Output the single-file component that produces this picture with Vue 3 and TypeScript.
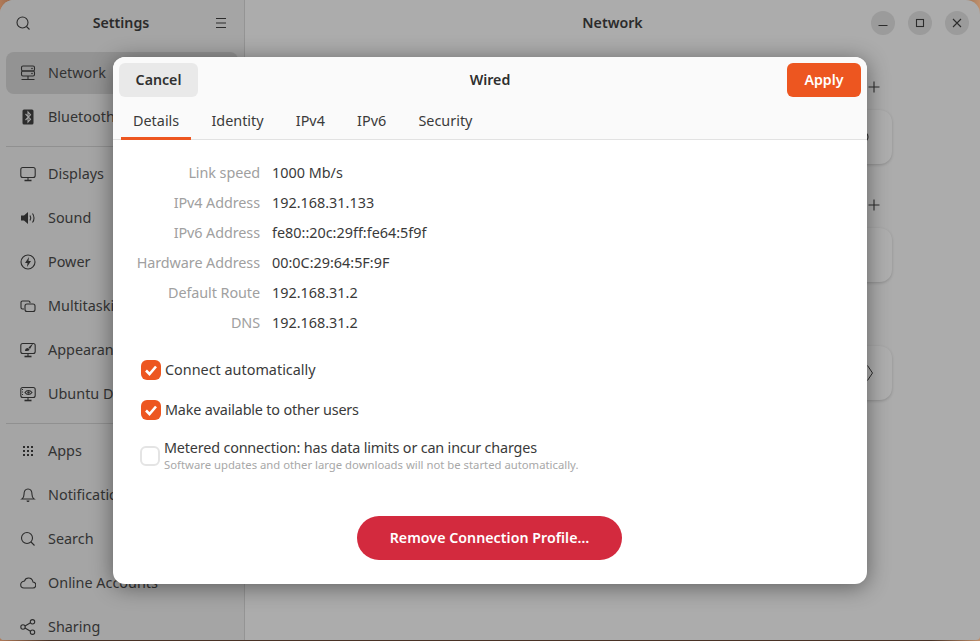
<script setup lang="ts">
interface NavItem { label: string; icon: string }
const navGroups: NavItem[][] = [
  [{ label: 'Network', icon: 'network' }, { label: 'Bluetooth', icon: 'bluetooth' }],
  [
    { label: 'Displays', icon: 'displays' },
    { label: 'Sound', icon: 'sound' },
    { label: 'Power', icon: 'power' },
    { label: 'Multitasking', icon: 'multitasking' },
    { label: 'Appearance', icon: 'appearance' },
    { label: 'Ubuntu Desktop', icon: 'ubuntu' },
  ],
  [
    { label: 'Apps', icon: 'apps' },
    { label: 'Notifications', icon: 'bell' },
    { label: 'Search', icon: 'search' },
    { label: 'Online Accounts', icon: 'cloud' },
    { label: 'Sharing', icon: 'share' },
  ],
]
const tabs = ['Details', 'Identity', 'IPv4', 'IPv6', 'Security']
const details = [
  ['Link speed', '1000 Mb/s'],
  ['IPv4 Address', '192.168.31.133'],
  ['IPv6 Address', 'fe80::20c:29ff:fe64:5f9f'],
  ['Hardware Address', '00:0C:29:64:5F:9F'],
  ['Default Route', '192.168.31.2'],
  ['DNS', '192.168.31.2'],
]
</script>

<template>
  <div class="desktop">
    <div class="window">
      <aside class="sidebar">
        <header class="side-head">
          <svg class="ic" viewBox="0 0 16 16"><circle cx="7.500" cy="7.500" r="5.500" /><path d="M11.500 11.500l3 3" /></svg>
          <span class="side-title">Settings</span>
          <svg class="ic" viewBox="0 0 16 16"><path d="M3 3.500h10M3 8h10M3 12.500h10" /></svg>
        </header>
        <template v-for="(group, gi) in navGroups" :key="gi">
          <div v-if="gi" class="divider"></div>
          <nav class="group">
            <div v-for="item in group" :key="item.label" class="nav" :class="{ active: item.label === 'Network' }">
              <svg class="ic nav-ic" viewBox="0 0 16 16">
                <template v-if="item.icon === 'network'">
                  <rect x="1.500" y="1" width="13" height="5" rx="1.500" /><rect x="1.500" y="6" width="13" height="5" rx="1.500" /><path d="M8 11v3M1.500 14.500h13" /><circle class="fill" cx="12" cy="3.500" r=".8" /><circle class="fill" cx="12" cy="8.500" r=".8" />
                </template>
                <template v-else-if="item.icon === 'bluetooth'">
                  <rect class="fill" x="2.500" y="0.500" width="11" height="15" rx="1.500" /><path class="cut" d="M5.500 5l5 5.200L8 13V3l2.500 2.800-5 5.200" />
                </template>
                <template v-else-if="item.icon === 'displays'">
                  <rect x="0.800" y="1.500" width="14.400" height="10" rx="2" /><path d="M8 11.500v2.500" /><path class="thick" d="M4.500 14.500h7" />
                </template>
                <template v-else-if="item.icon === 'sound'">
                  <path class="fill" d="M1 5.500h3L8 2v12L4 10.500H1z" /><path d="M10 5.500c1 1.500 1 3.500 0 5M12.500 3.500c2 2.500 2 6.500 0 9" />
                </template>
                <template v-else-if="item.icon === 'power'">
                  <circle cx="8" cy="8" r="7" /><path class="fill" d="M9 3L5 9h2.500L7 13l4-6H8.500z" />
                </template>
                <template v-else-if="item.icon === 'multitasking'">
                  <path d="M4 11H2.500A1.500 1.500 0 0 1 1 9.500v-5A1.500 1.500 0 0 1 2.500 3h6A1.500 1.500 0 0 1 10 4.500V5" /><rect x="5" y="6" width="10" height="7.500" rx="2" />
                </template>
                <template v-else-if="item.icon === 'appearance'">
                  <rect x="0.800" y="1.500" width="14.400" height="10" rx="2" /><path d="M8 11.500v2.500" /><path class="thick" d="M4.500 14.500h7" /><path class="fill" d="M13.500 0.800L8.500 5.500 10 7zM8 6c-2 0-3 1-3 3 1.500 0 4.500 0 4.500-1.500z" />
                </template>
                <template v-else-if="item.icon === 'ubuntu'">
                  <rect x="0.800" y="1.500" width="14.400" height="10" rx="2" /><path d="M8 11.500v2.500" /><path class="thick" d="M4.500 14.500h7" /><path d="M5 6.500c1.800-2.600 5-2.600 7 0-2 2.600-5.200 2.600-7 0zM2 3.500h1M2 6h1M2 8.500h1" /><circle class="fill" cx="8.500" cy="6.500" r="1.200" />
                </template>
                <template v-else-if="item.icon === 'apps'">
                  <g class="fill"><rect x="3" y="3" width="2" height="2" /><rect x="7" y="3" width="2" height="2" /><rect x="11" y="3" width="2" height="2" /><rect x="3" y="7" width="2" height="2" /><rect x="7" y="7" width="2" height="2" /><rect x="11" y="7" width="2" height="2" /><rect x="3" y="11" width="2" height="2" /><rect x="7" y="11" width="2" height="2" /><rect x="11" y="11" width="2" height="2" /></g>
                </template>
                <template v-else-if="item.icon === 'bell'">
                  <path d="M2 12c1.500-1 2-2 2-4.500C4 4 5.500 2 8 2s4 2 4 5.500c0 2.500.5 3.500 2 4.500z" /><path class="fill" d="M6.500 13.500h3a1.500 1.500 0 0 1-3 0z" />
                </template>
                <template v-else-if="item.icon === 'search'">
                  <circle cx="7" cy="7" r="5.500" /><path d="M11 11l3.500 3.500" />
                </template>
                <template v-else-if="item.icon === 'cloud'">
                  <path d="M4 13h8.500a3 3 0 0 0 .5-6C12.500 4.500 10.500 3 8.500 3 6.500 3 5 4.200 4.500 6 2.500 6.300.7 7.800.7 9.800.7 11.800 2.200 13 4 13z" />
                </template>
                <template v-else>
                  <circle cx="3" cy="8" r="2.200" /><circle cx="12.500" cy="2.800" r="2.200" /><circle cx="12.500" cy="13.200" r="2.200" /><path d="M5 7l5.500-3.200M5 9l5.500 3.200" />
                </template>
              </svg>
              <span class="nav-text">{{ item.label }}</span>
            </div>
          </nav>
        </template>
      </aside>

      <main class="content">
        <header class="main-head">
          <span class="main-title">Network</span>
          <div class="controls">
            <span class="ctl"><svg class="ic" viewBox="0 0 16 16"><path d="M3.500 10.500h9" /></svg></span>
            <span class="ctl"><svg class="ic" viewBox="0 0 16 16"><rect x="4.500" y="4.500" width="7" height="7" /></svg></span>
            <span class="ctl"><svg class="ic" viewBox="0 0 16 16"><path d="M4 4l8 8M12 4l-8 8" /></svg></span>
          </div>
        </header>
        <section class="sec">
          <div class="add"><svg class="ic" viewBox="0 0 16 16"><path d="M8 2.500v11M2.500 8h11" /></svg></div>
          <div class="card"><svg class="ic gear" viewBox="0 0 16 16"><circle cx="8" cy="8" r="5" /><circle cx="8" cy="8" r="2" /></svg></div>
        </section>
        <section class="sec">
          <div class="add"><svg class="ic" viewBox="0 0 16 16"><path d="M8 2.500v11M2.500 8h11" /></svg></div>
          <div class="card"></div>
        </section>
        <section class="sec last">
          <div class="card"><svg class="chev" viewBox="0 0 6 16"><path d="M.5.500L5.500 8 .5 15.500" /></svg></div>
        </section>
      </main>
    </div>

    <div class="dialog">
      <header class="d-top">
        <div class="d-bar">
          <button class="btn cancel">Cancel</button>
          <span class="d-title">Wired</span>
          <button class="btn apply">Apply</button>
        </div>
        <div class="tabs">
          <span v-for="(t, i) in tabs" :key="t" class="tab" :class="{ on: i === 0 }">{{ t }}</span>
        </div>
      </header>
      <div class="d-body">
        <dl class="details">
          <template v-for="row in details" :key="row[0]">
            <dt>{{ row[0] }}</dt>
            <dd>{{ row[1] }}</dd>
          </template>
        </dl>
        <div class="check-row">
          <span class="box on"><svg viewBox="0 0 20 20"><path d="M5 10.500l3.500 3.500 6.500-7.500" /></svg></span>
          <span class="check-label">Connect automatically</span>
        </div>
        <div class="check-row">
          <span class="box on"><svg viewBox="0 0 20 20"><path d="M5 10.500l3.500 3.500 6.500-7.500" /></svg></span>
          <span class="check-label tight">Make available to other users</span>
        </div>
        <div class="check-row metered">
          <span class="box"></span>
          <div class="meter-text">
            <span class="check-label tight">Metered connection: has data limits or can incur charges</span>
            <span class="sub">Software updates and other large downloads will not be started automatically.</span>
          </div>
        </div>
        <div class="remove-wrap"><button class="btn remove">Remove Connection Profile…</button></div>
      </div>
    </div>
  </div>
</template>

<style>
html, body { margin: 0; background: #4a3326; }
</style>

<style scoped>
.desktop {
  position: relative;
  width: 980px;
  height: 641px;
  overflow: hidden;
  font-family: "Noto Sans", "Open Sans", sans-serif;
  font-size: 14.4px;
  color: #2e2e2e;
  background: linear-gradient(90deg, #b07a58, #4a3326 5%, #4a3326 95%, #c0906c);
}
.window {
  display: flex;
  height: 640px;
  border-radius: 14px 14px 4px 4px;
  overflow: hidden;
  background: #acacac;
}
.ic { width: 16px; height: 16px; fill: none; stroke: #2c2c2c; stroke-width: 1.1; flex: none; }
.ic .fill { fill: #2c2c2c; stroke: none; }
.thick { stroke-width: 1.6; }
.ic .cut { stroke: #a4a4a4; }
.sidebar {
  width: 245px;
  flex: none;
  box-sizing: border-box;
  background: #a5a5a5;
  border-right: 1px solid #949494;
  padding: 0 6px;
}
.side-head {
  height: 46px;
  display: flex;
  align-items: center;
  justify-content: space-between;
  padding: 0 9px 0 9px;
}
.side-title { font-weight: 600; color: #2b2b2b; font-size: 14.2px; margin: 0 2px 2px 0; }
.group { display: flex; flex-direction: column; gap: 2px; padding: 6px 0; }
.divider { height: 1px; background: #909090; margin-top: 2px; }
.nav {
  height: 42px;
  display: flex;
  align-items: center;
  padding-left: 14px;
  border-radius: 8px;
  white-space: nowrap;
  color: #333;
}
.nav.active { background: #939393; }
.nav-ic { margin-right: 12px; }
.nav-text { padding-bottom: 2px; }
.content { flex: 1; display: flex; flex-direction: column; min-width: 0; }
.main-head {
  height: 46px;
  position: relative;
  display: flex;
  align-items: center;
  justify-content: center;
}
.main-title { font-weight: 600; font-size: 14.2px; color: #2b2b2b; padding-bottom: 2px; }
.controls {
  position: absolute;
  right: 11px;
  top: 11px;
  display: flex;
  gap: 13px;
}
.ctl {
  width: 24px;
  height: 24px;
  border-radius: 50%;
  background: #9b9b9b;
  display: flex;
  align-items: center;
  justify-content: center;
}
.sec { padding: 18px 88px 0 0; display: flex; flex-direction: column; }
.add { height: 46px; display: flex; align-items: center; justify-content: flex-end; margin-right: 10px; }
.card {
  height: 54px;
  border-radius: 12px;
  background: #aeaeae;
  box-shadow: 0 1px 3px rgba(0, 0, 0, .18);
  display: flex;
  align-items: center;
  justify-content: flex-end;
}
.sec.last { padding-top: 64px; }
.gear { margin-right: 21px; }
.chev { width: 6px; height: 16px; margin-right: 19px; fill: none; stroke: #2c2c2c; stroke-width: 1; }
.dialog {
  position: absolute;
  left: 113px;
  top: 57px;
  width: 754px;
  height: 527px;
  display: flex;
  flex-direction: column;
  background: #fff;
  border-radius: 12px;
  overflow: hidden;
  box-shadow: 0 3px 22px rgba(0, 0, 0, .45);
}
.d-top { background: #fafafa; border-bottom: 1px solid #e2e2e2; height: 83px; box-sizing: border-box; flex: none; }
.d-bar {
  display: grid;
  grid-template-columns: 1fr auto 1fr;
  align-items: center;
  padding: 6px 6px 0;
}
.btn {
  font-family: inherit;
  font-size: 14.2px;
  font-weight: 600;
  border: 0;
  padding: 0 0 2px;
  display: flex;
  align-items: center;
  justify-content: center;
}
.cancel { width: 79px; height: 34px; border-radius: 6px; background: #e9e9e9; color: #303030; }
.apply { width: 74px; height: 34px; border-radius: 6px; background: #ed5620; color: #fff; justify-self: end; }
.d-title { font-weight: 600; font-size: 14.2px; color: #2e2e2e; padding-bottom: 2px; }
.tabs { display: flex; padding-left: 8px; height: 43px; box-sizing: border-box; }
.tab {
  position: relative;
  padding: 13px 12px 0;
  margin-right: 8.200px;
  line-height: 22px;
  color: #3a3a3a;
}
.tab.on::after {
  content: "";
  position: absolute;
  left: 0;
  right: 0;
  bottom: 0;
  height: 3px;
  background: #ed5620;
}
.d-body { flex: 1; display: flex; flex-direction: column; padding-top: 18px; }
.details {
  display: grid;
  grid-template-columns: 147px 1fr;
  column-gap: 12px;
  margin: 0;
  grid-auto-rows: 30px;
  align-items: center;
}
dt { text-align: right; color: #a0a0a0; padding-bottom: 2px; letter-spacing: -.08px; }
dd { margin: 0; color: #3a3a3a; padding-bottom: 2px; }
.check-row { display: flex; align-items: center; gap: 4px; padding-left: 28px; height: 40px; color: #3a3a3a; }
.check-label { padding-bottom: 2px; }
.tight { letter-spacing: -.18px; }
.details + .check-row { margin-top: 12px; }
.box {
  width: 20px;
  height: 20px;
  border-radius: 6px;
  flex: none;
  box-sizing: border-box;
  border: 2px solid #e4e4e4;
}
.box.on { background: #ed5620; border: 0; }
.box svg { display: block; fill: none; stroke: #fff; stroke-width: 2.6; }
.metered { padding-left: 27px; height: 44px; margin-top: 4px; }
.meter-text { display: flex; flex-direction: column; padding-bottom: 2px; }
.meter-text .check-label { line-height: 18px; padding: 0 0 1px; }
.sub { font-size: 11.300px; color: #a8a8a8; line-height: 14px; }
.remove-wrap { display: flex; justify-content: center; margin-top: 38px; padding-right: 1px; }
.remove { width: 265px; height: 44px; border-radius: 22px; background: #d32a3e; color: #fff; letter-spacing: .04px; }
</style>
